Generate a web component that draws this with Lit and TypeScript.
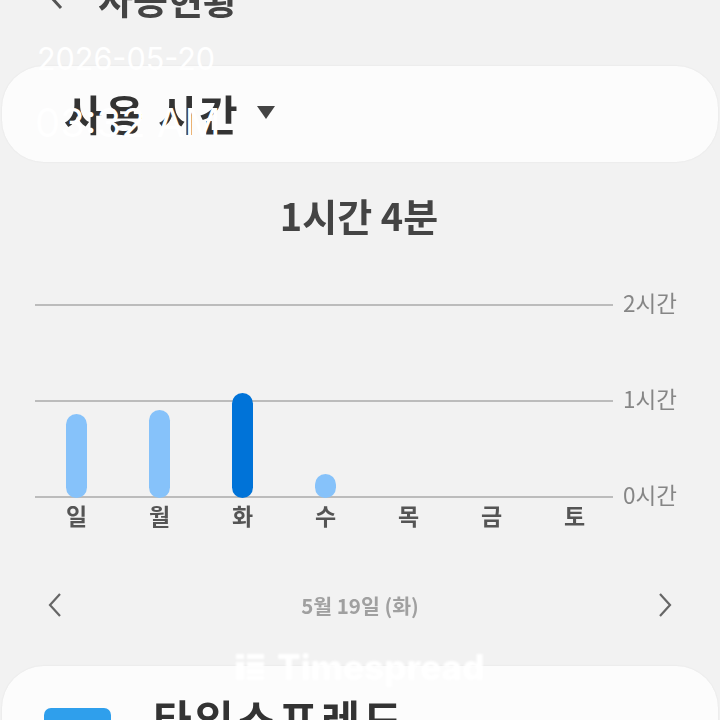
import { LitElement, html, css } from "lit";
import { customElement } from "lit/decorators.js";

const days = [
  { label: "일", height: 84 },
  { label: "월", height: 88 },
  { label: "화", height: 105, active: true },
  { label: "수", height: 24 },
  { label: "목", height: 0 },
  { label: "금", height: 0 },
  { label: "토", height: 0 },
];

const ticks = ["2시간", "1시간", "0시간"];

@customElement("app-root")
export class AppRoot extends LitElement {
  static styles = css`
    :host {
      display: block;
      position: relative;
      width: 720px;
      height: 720px;
      overflow: hidden;
      background: #f2f2f2;
      font-family: "Noto Sans CJK KR", "Noto Sans", sans-serif;
    }

    .screen {
      filter: blur(0.7px);
      height: 720px;
      overflow: hidden;
    }

    .header {
      display: flex;
      align-items: center;
      height: 40px;
      margin-top: -23px;
      padding-left: 48px;
      gap: 34px;
      font-size: 38px;
      font-weight: 700;
      color: #444;
    }

    .back {
      width: 16px;
      height: 26px;
      flex: none;
    }

    .card {
      background: #fcfcfc;
      margin: 0 2px;
      border-radius: 42px;
      box-shadow: 0 0 2px rgba(0, 0, 0, 0.08);
    }

    .selector {
      display: flex;
      align-items: center;
      height: 96px;
      box-sizing: border-box;
      padding-bottom: 3px;
      margin-top: 49px;
      padding-left: 62px;
      gap: 17px;
      font-size: 42px;
      letter-spacing: 2.4px;
      font-weight: 700;
      color: #333;
    }

    .caret {
      width: 0;
      height: 0;
      border-left: 9.5px solid transparent;
      border-right: 9.5px solid transparent;
      border-top: 13px solid #444;
    }

    .total {
      margin-top: 27px;
      height: 52px;
      line-height: 52px;
      text-align: center;
      font-size: 38px;
      font-weight: 700;
      color: #444;
      padding-right: 2px;
    }

    .chart {
      display: grid;
      margin: 63px 0 0 35px;
      width: 642px;
      height: 194px;
    }

    .grid-lines,
    .bars {
      grid-area: 1 / 1;
    }

    .grid-lines {
      display: flex;
      flex-direction: column;
      justify-content: space-between;
    }

    .tick {
      display: flex;
      align-items: center;
      height: 2px;
      gap: 10px;
    }

    .tick-line {
      width: 578px;
      height: 2px;
      background: #bcbcbc;
    }

    .tick-label {
      font-size: 22.5px;
      color: #868686;
      margin-top: -7px;
    }

    .bars {
      display: grid;
      grid-template-columns: repeat(7, 83px);
      align-items: end;
    }

    .bar {
      width: 21px;
      justify-self: center;
      border-radius: 11px;
      background: #86c2fa;
    }

    .bar.active {
      background: #0073d8;
    }

    .days {
      display: grid;
      grid-template-columns: repeat(7, 83px);
      margin: 1px 0 0 35px;
    }

    .day {
      text-align: center;
      font-size: 23px;
      line-height: 32px;
      font-weight: 700;
      color: #555;
    }

    .date-nav {
      display: flex;
      align-items: center;
      justify-content: space-between;
      margin-top: 58px;
      padding: 0 47px;
      height: 32px;
    }

    .date-nav svg {
      width: 16px;
      height: 26px;
    }

    .date {
      font-size: 20.5px;
      font-weight: 700;
      color: #a0a0a0;
    }

    .app-row {
      display: flex;
      margin-top: 45px;
      height: 200px;
      padding: 42px 0 0 42px;
      gap: 42px;
      box-sizing: border-box;
    }

    .app-icon {
      width: 67px;
      height: 67px;
      border-radius: 7px;
      background: #2f9fec;
      flex: none;
    }

    .app-name {
      font-size: 42px;
      letter-spacing: 3.4px;
      font-weight: 700;
      color: #333;
      line-height: 50px;
      margin-top: -15px;
    }

    .stamp {
      position: absolute;
      left: 37px;
      color: #fff;
      font-family: Inter, "Noto Sans", sans-serif;
    }

    .stamp.date-stamp {
      top: 40px;
      font-size: 30.5px;
      line-height: 38px;
    }

    .stamp.time-stamp {
      top: 101px;
      left: 35px;
      font-size: 40px;
      line-height: 44px;
    }

    .brand {
      position: absolute;
      left: 236px;
      top: 647px;
      display: flex;
      align-items: center;
      gap: 13px;
      color: #fff;
      font-family: Inter, "Noto Sans", sans-serif;
      font-size: 35px;
      font-weight: 800;
      line-height: 40px;
      filter: blur(0.9px);
    }

    .brand svg {
      width: 28px;
      height: 28px;
    }
  `;

  render() {
    return html`
      <div class="screen">
        <div class="header">
          <svg class="back" viewBox="0 0 16 26" fill="none" stroke="#555" stroke-width="3">
            <path d="M13 2 3 13l10 11" />
          </svg>
          <span>사용현황</span>
        </div>

        <div class="card selector">
          <span>사용 시간</span>
          <span class="caret"></span>
        </div>

        <div class="total">1시간 4분</div>

        <div class="chart">
          <div class="grid-lines">
            ${ticks.map(
              (t) => html`<div class="tick">
                <div class="tick-line"></div>
                <span class="tick-label">${t}</span>
              </div>`
            )}
          </div>
          <div class="bars">
            ${days.map(
              (d) =>
                html`<div
                  class="bar ${d.active ? "active" : ""}"
                  style="height: ${d.height}px"
                ></div>`
            )}
          </div>
        </div>
        <div class="days">
          ${days.map((d) => html`<div class="day">${d.label}</div>`)}
        </div>

        <div class="date-nav">
          <svg viewBox="0 0 16 26" fill="none" stroke="#666" stroke-width="2.2">
            <path d="M13 2 3 13l10 11" />
          </svg>
          <span class="date">5월 19일 (화)</span>
          <svg viewBox="0 0 16 26" fill="none" stroke="#666" stroke-width="2.2">
            <path d="M3 2l10 11L3 24" />
          </svg>
        </div>

        <div class="card app-row">
          <div class="app-icon"></div>
          <div class="app-name">타임스프레드</div>
        </div>
      </div>

      <div class="stamp date-stamp">2026-05-20</div>
      <div class="stamp time-stamp">03:32 AM</div>
      <div class="brand">
        <svg viewBox="0 0 28 28" fill="#fff">
          <rect x="0" y="1" width="8" height="5" />
          <rect x="0" y="9" width="8" height="18" />
          <rect x="11" y="1" width="17" height="5" />
          <rect x="11" y="9" width="17" height="5" />
          <rect x="11" y="16" width="17" height="5" />
          <rect x="11" y="23" width="17" height="4" />
        </svg>
        <span>Timespread</span>
      </div>
    `;
  }
}

declare global {
  interface HTMLElementTagNameMap {
    "app-root": AppRoot;
  }
}
